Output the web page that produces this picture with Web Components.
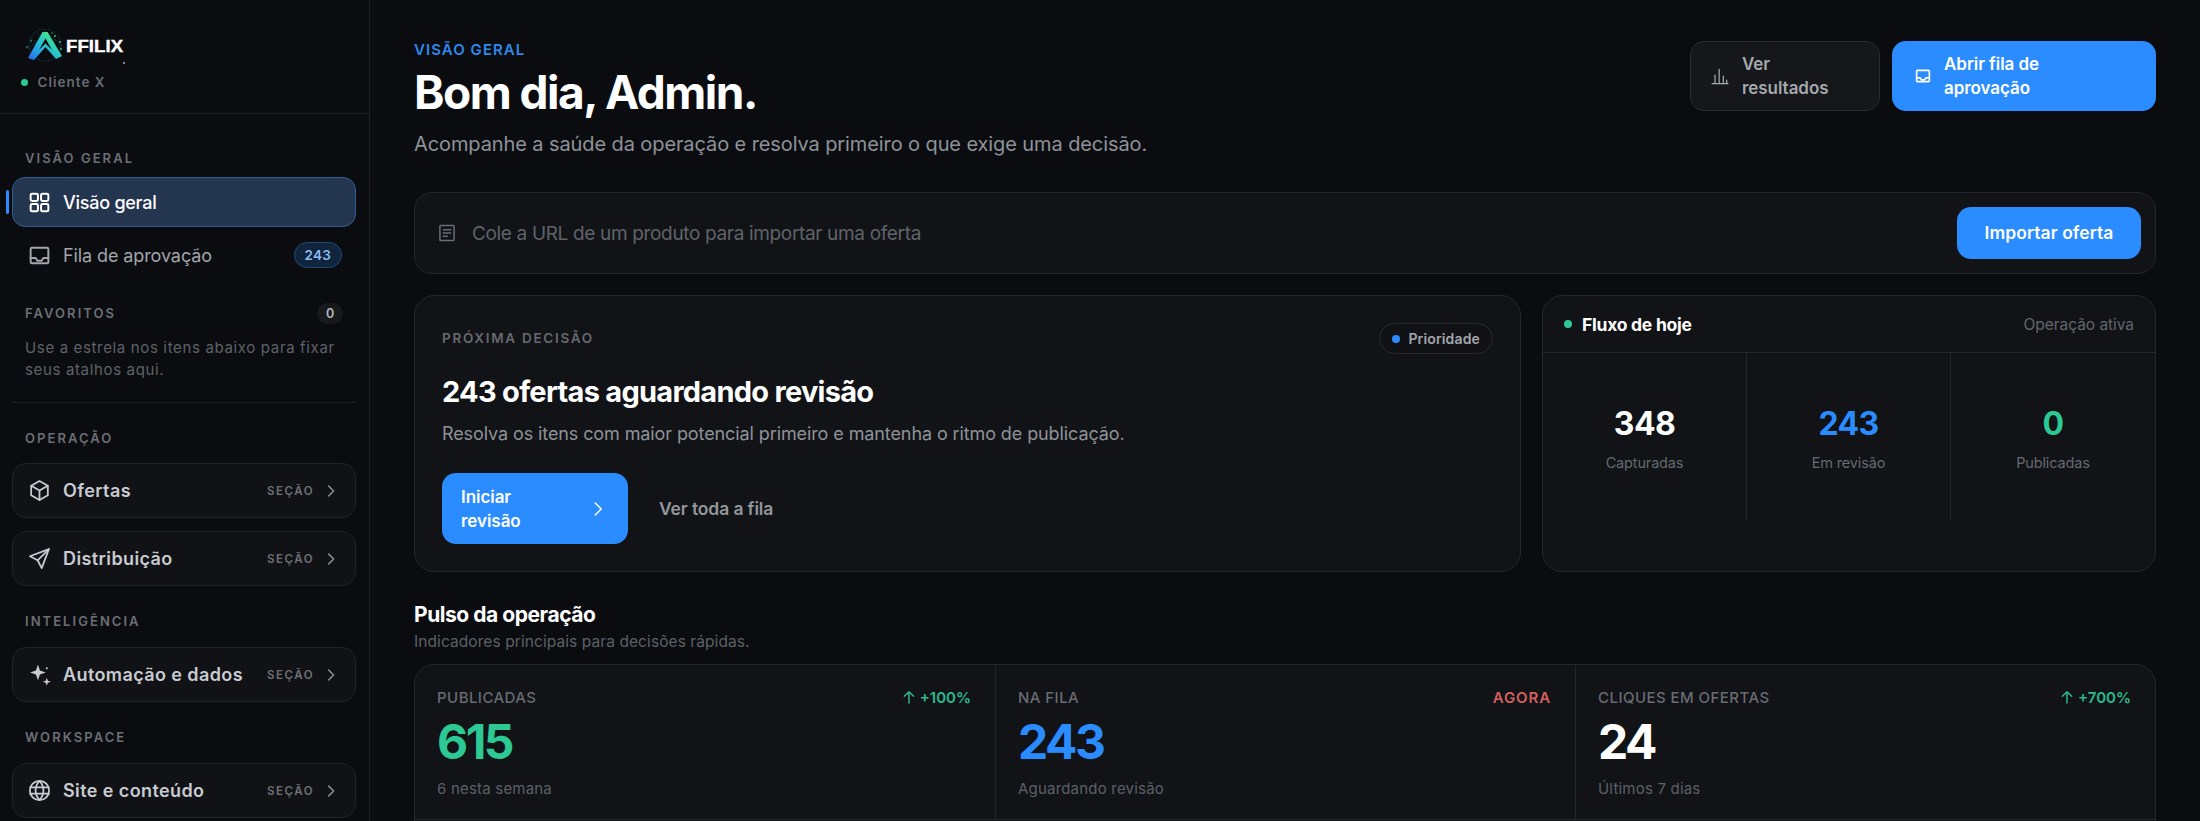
<!DOCTYPE html>
<html lang="pt-BR">
<head>
<meta charset="utf-8">
<title>Affilix</title>
<style>
  html, body { margin: 0; height: 100%; background: #0a0c10; overflow: hidden; }
  body { font-family: Inter, "Noto Sans", sans-serif; color: #fff; }
</style>
</head>
<body>
<app-shell>
  <side-bar slot="side"></side-bar>
  <main-panel slot="main"></main-panel>
</app-shell>

<script>
const ICONS = {
  grid: '<rect x="3.5" y="3.5" width="7" height="7" rx="1.4"/><rect x="13.5" y="3.5" width="7" height="7" rx="1.4"/><rect x="3.5" y="13.5" width="7" height="7" rx="1.4"/><rect x="13.5" y="13.5" width="7" height="7" rx="1.4"/>',
  inbox: '<rect x="3.5" y="4.5" width="17" height="15" rx="1.2"/><path d="M3.5 14.5h4.8l1.6 2.6h4.2l1.6-2.6h4.8"/>',
  box: '<path d="M12 2.8l8 4.6v9.2l-8 4.6-8-4.6V7.4z"/><path d="M4.2 7.5L12 12l7.8-4.5M12 12v9"/>',
  send: '<path d="M21 3L2.8 9.8l7.4 3.9 3.9 7.5z"/><path d="M21 3L10.2 13.7"/>',
  globe: '<circle cx="12" cy="12" r="9.2"/><path d="M3 9h18M3 15h18"/><path d="M12 2.8c-5 5.6-5 12.8 0 18.4M12 2.8c5 5.6 5 12.8 0 18.4"/>',
  chevron: '<path d="M9 5.5l6.5 6.5L9 18.5"/>',
  bars: '<path d="M2.5 21h19M6 21V11M11 21V4M16 21v-9M20 21v-4"/>',
  note: '<rect x="3.5" y="3" width="17" height="18" rx="1"/><path d="M7.5 8h9M7.5 12h9M7.5 16h5"/>',
  up: '<path d="M12 21V4M5 11l7-7 7 7"/>'
};
const SPARK = '<svg viewBox="0 0 24 24" fill="currentColor"><path d="M10.500 2.500l1.900 5.600 5.600 1.900-5.600 1.900-1.900 5.600-1.900-5.600L3 10l5.600-1.900z"/><path d="M19 15l1 2.900 2.900 1-2.900 1-1 2.900-1-2.900-2.900-1 2.900-1z"/><circle cx="19" cy="6" r="1"/></svg>';

function icon(name, size, width = 2) {
  if (name === 'spark') return SPARK.replace('<svg ', `<svg width="${size}" height="${size}" `);
  return `<svg width="${size}" height="${size}" viewBox="0 0 24 24" fill="none" stroke="currentColor" stroke-width="${width}" stroke-linecap="round" stroke-linejoin="round">${ICONS[name]}</svg>`;
}

// small helper so each class stays a few lines
function define(tag, render) {
  customElements.define(tag, class extends HTMLElement {
    connectedCallback() {
      if (this.shadowRoot) return;
      this.attachShadow({ mode: 'open' });
      this.shadowRoot.innerHTML = render(this);
    }
  });
}

define('app-shell', () => `
  <style>
    :host { display: flex; width: 2200px; height: 821px; overflow: hidden; background: #0a0c10; }
    ::slotted([slot=side]) { flex: 0 0 370px; }
    ::slotted([slot=main]) { flex: 1; min-width: 0; }
  </style>
  <slot name="side"></slot><slot name="main"></slot>`);

define('brand-logo', () => `
  <style>
    :host { display: flex; align-items: center; width: 110px; height: 34px; position: relative; }
    svg { flex: none; margin-right: -1px; }
    span { font: 700 16.5px "Liberation Sans", sans-serif; color: #fff; letter-spacing: .1px; -webkit-text-stroke: .4px #fff; transform: scaleX(1.12); transform-origin: left center; }
    i { position: absolute; left: 98px; top: 33px; width: 2px; height: 2px; background: #aaa; border-radius: 50%; }
  </style>
  <svg width="42" height="34" viewBox="0 0 42 34">
    <defs><linearGradient id="lg" x1="0" y1="1" x2="1" y2="0">
      <stop offset="0" stop-color="#2a62ea"/><stop offset=".4" stop-color="#22b6e0"/><stop offset=".7" stop-color="#35dba0"/><stop offset="1" stop-color="#c6e63c"/>
    </linearGradient></defs>
    <circle cx="20" cy="16" r="16" fill="none" stroke="#1c5a5c" stroke-width=".7" stroke-dasharray="1.500 1.500"/>
    <path d="M4 9l8 4 8-11 10 8 7 8M2 20l10-7 14 9 10-4M12 3l8 13M30 10l-2 14" fill="none" stroke="#17484c" stroke-width=".5"/>
    <g fill="#3fc7a0"><circle cx="30" cy="7" r=".9"/><circle cx="35" cy="13" r=".9"/><circle cx="36" cy="20" r=".9"/><circle cx="6" cy="12" r=".8"/><circle cx="27" cy="4" r=".7"/><circle cx="33" cy="27" r=".7"/><circle cx="2" cy="18" r=".8"/></g>
    <path d="M3 29L17.500 3h5L37 27l-6 3-10.500-12L9 31z" fill="url(#lg)"/>
    <path d="M20.500 9.500L27 21l-6.500-6.500L14 21z" fill="#0a0c10"/>
  </svg>
  <span>FFILIX</span><i></i>`);

define('side-label', () => `
  <style>
    :host { display: flex; align-items: center; justify-content: space-between; height: 18px; padding: 0 13px; font: 600 13px/18px Inter, sans-serif; letter-spacing: 2.05px; color: #6c6f75; }
  </style>
  <slot></slot>`);

define('nav-link', el => `
  <style>
    :host { display: flex; align-items: center; height: 50px; box-sizing: border-box; padding: 0 13px 0 14px; border-radius: 13px; border: 1px solid transparent; color: #a2a5aa; font: 400 18px Inter, sans-serif; letter-spacing: -.1px; position: relative; }
    :host([active]) { background: #23354f; border-color: #2f5f94; color: #fff; font-weight: 500; letter-spacing: -.25px; }
    :host([active])::before { content: ""; position: absolute; left: -7px; top: 12px; width: 3px; height: 24px; border-radius: 2px; background: #2a8cff; }
    svg { flex: none; margin-right: 11px; }
    b { margin-left: auto; font: 600 13.5px/24px Inter, sans-serif; letter-spacing: .2px; color: #8dbcf2; height: 24px; padding: 0 10px; border-radius: 13px; border: 1px solid #1d4a78; background: #10243c; }
  </style>
  ${icon(el.getAttribute('icon'), 25, 1.9)}<slot></slot>${el.hasAttribute('count') ? `<b>${el.getAttribute('count')}</b>` : ''}`);

define('nav-section', el => `
  <style>
    :host { display: flex; align-items: center; height: 55px; box-sizing: border-box; padding: 0 15px 0 14px; border-radius: 14px; border: 1px solid #202328; background: #101216; color: #c9cbd0; font: 600 18px Inter, sans-serif; letter-spacing: .4px; }
    svg { flex: none; }
    .lead { display: flex; margin-right: 11px; }
    em { margin-left: auto; font: 600 11.5px Inter, sans-serif; font-style: normal; letter-spacing: 1.5px; color: #6e7177; margin-right: 8px; }
    .end { display: flex; color: #8c8f95; }
  </style>
  <span class="lead">${icon(el.getAttribute('icon'), 25, 1.7)}</span><slot></slot>
  <em>SEÇÃO</em><span class="end">${icon('chevron', 18, 1.9)}</span>`);

define('side-bar', () => `
  <style>
    :host { display: block; box-sizing: border-box; border-right: 1px solid #1e2025; height: 821px; overflow: hidden; background: #0a0c10; }
    header { height: 114px; box-sizing: border-box; padding: 29px 0 0 25px; border-bottom: 1px solid #1e2025; }
    .client { display: flex; align-items: center; margin: 10px 0 0 -4.5px; font: 600 13.5px/18px Inter, sans-serif; letter-spacing: 1px; color: #686b71; }
    .client i { width: 7px; height: 7px; border-radius: 50%; background: #2cc995; margin-right: 10px; }
    nav { display: flex; flex-direction: column; padding: 35px 13px 0 12px; }
    .links { display: flex; flex-direction: column; gap: 3px; margin: 10px 0 24px; }
    .zero { font: 600 12.5px/21px Inter, sans-serif; letter-spacing: 0; width: 26px; text-align: center; border-radius: 11px; background: #17191d; color: #b4b6ba; }
    p { margin: 15px 13px 21px; font: 400 15px/22px Inter, sans-serif; color: #5f6268; letter-spacing: .65px; white-space: nowrap; }
    hr { border: 0; height: 1px; margin: 0 0 26px; background: #1e2025; }
    .stack { display: flex; flex-direction: column; gap: 13px; margin: 17px 0 26px; }
    .first { margin-top: 16px; }
  </style>
  <header>
    <brand-logo></brand-logo>
    <div class="client"><i></i>Cliente X</div>
  </header>
  <nav>
    <side-label>VISÃO GERAL</side-label>
    <div class="links">
      <nav-link icon="grid" active>Visão geral</nav-link>
      <nav-link icon="inbox" count="243">Fila de aprovação</nav-link>
    </div>
    <side-label>FAVORITOS<span class="zero">0</span></side-label>
    <p>Use a estrela nos itens abaixo para fixar<br>seus atalhos aqui.</p>
    <hr>
    <side-label>OPERAÇÃO</side-label>
    <div class="stack first"><nav-section icon="box">Ofertas</nav-section><nav-section icon="send">Distribuição</nav-section></div>
    <side-label>INTELIGÊNCIA</side-label>
    <div class="stack"><nav-section icon="spark">Automação e dados</nav-section></div>
    <side-label>WORKSPACE</side-label>
    <div class="stack"><nav-section icon="globe">Site e conteúdo</nav-section></div>
  </nav>`);

define('ui-button', () => `
  <style>
    :host { display: flex; align-items: center; box-sizing: border-box; border-radius: 14px; font: 600 17px/24px Inter, sans-serif; letter-spacing: -.05px; background: #2a8cff; color: #fff; }
    :host([ghost]) { background: #15171b; border: 1px solid #282b30; color: #a5a8ad; }
  </style>
  <slot></slot>`);

define('page-head', () => `
  <style>
    :host { display: flex; justify-content: space-between; align-items: flex-start; height: 117px; margin-bottom: 34px; }
    small { display: block; font: 600 15px/18px Inter, sans-serif; letter-spacing: 1.05px; color: #2f88ea; }
    h1 { margin: 4px 0 0; font: 700 46px/58px Inter, sans-serif; letter-spacing: -1.5px; color: #fff; }
    p { margin: 10px 0 0; font: 400 20px/26px Inter, sans-serif; letter-spacing: -.1px; color: #8f9298; }
    .acts { display: flex; gap: 12px; }
    ui-button { height: 70px; }
    .a { width: 190px; padding-left: 19px; }
    .b { width: 264px; padding-left: 22px; }
    svg { margin-right: 12px; flex: none; }
  </style>
  <div>
    <small>VISÃO GERAL</small>
    <h1>Bom dia, Admin.</h1>
    <p>Acompanhe a saúde da operação e resolva primeiro o que exige uma decisão.</p>
  </div>
  <div class="acts">
    <ui-button ghost class="a">${icon('bars', 20, 1.5)}<span>Ver<br>resultados</span></ui-button>
    <ui-button class="b">${icon('inbox', 18, 2.2)}<span>Abrir fila de<br>aprovação</span></ui-button>
  </div>`);

define('import-bar', () => `
  <style>
    :host { display: flex; align-items: center; height: 82px; box-sizing: border-box; padding: 0 14px 0 22px; border: 1px solid #23262b; border-radius: 18px; background: #111317; color: #5f6369; font: 400 19px Inter, sans-serif; letter-spacing: -.34px; }
    svg { margin-right: 15px; color: #6a6d73; flex: none; }
    ui-button { margin-left: auto; width: 184px; height: 52px; justify-content: center; font-size: 17.5px; letter-spacing: .05px; }
  </style>
  ${icon('note', 20, 1.8)}<span>Cole a URL de um produto para importar uma oferta</span>
  <ui-button>Importar oferta</ui-button>`);

define('decision-card', () => `
  <style>
    :host { display: block; box-sizing: border-box; height: 277px; padding: 27px 27px 0; border: 1px solid #23262b; border-radius: 20px; background: #111317; }
    .top { display: flex; justify-content: space-between; align-items: center; height: 31px; }
    small { font: 600 13.5px Inter, sans-serif; letter-spacing: 1.7px; color: #67696f; padding-bottom: 2px; }
    .pill { display: flex; align-items: center; box-sizing: border-box; height: 31px; padding: 0 12px; border: 1px solid #282b30; border-radius: 16px; font: 600 14px Inter, sans-serif; letter-spacing: .15px; color: #a3a6ab; background: #101216; }
    .pill i { width: 8px; height: 8px; border-radius: 50%; background: #2a8cff; margin-right: 8px; }
    h2 { margin: 19px 0 0; font: 700 29px/38px Inter, sans-serif; letter-spacing: -.73px; color: #fff; }
    p { margin: 10px 0 0; font: 400 18px/26px Inter, sans-serif; letter-spacing: -.1px; color: #8f9298; }
    .row { display: flex; align-items: center; margin-top: 26px; }
    ui-button { width: 186px; height: 71px; padding: 0 19px 0 19px; justify-content: space-between; }
    a { margin-left: 31px; font: 600 17.5px Inter, sans-serif; letter-spacing: -.12px; color: #94979c; }
  </style>
  <div class="top"><small>PRÓXIMA DECISÃO</small><span class="pill"><i></i>Prioridade</span></div>
  <h2>243 ofertas aguardando revisão</h2>
  <p>Resolva os itens com maior potencial primeiro e mantenha o ritmo de publicação.</p>
  <div class="row">
    <ui-button><span>Iniciar<br>revisão</span>${icon('chevron', 22, 1.6)}</ui-button>
    <a>Ver toda a fila</a>
  </div>`);

define('flow-stat', el => `
  <style>
    :host { display: block; height: 168px; box-sizing: border-box; padding-top: 51px; text-align: center; border-right: 1px solid #23262b; }
    :host(:last-child) { border-right: 0; }
    b { display: block; font: 700 32px/40px Inter, sans-serif; letter-spacing: -.6px; color: ${el.getAttribute('color') || '#fff'}; }
    span { display: block; margin-top: 9px; font: 400 14.5px/20px Inter, sans-serif; letter-spacing: -.15px; color: #666970; }
  </style>
  <b>${el.getAttribute('value')}</b><span><slot></slot></span>`);

define('flow-card', () => `
  <style>
    :host { display: block; box-sizing: border-box; height: 277px; border: 1px solid #23262b; border-radius: 20px; background: #111317; }
    .head { display: flex; align-items: center; height: 56px; padding: 0 21px; border-bottom: 1px solid #23262b; }
    i { width: 8px; height: 8px; border-radius: 50%; background: #2cc995; margin-right: 10px; }
    b { font: 700 17.5px Inter, sans-serif; letter-spacing: -.25px; color: #fff; }
    span { margin-left: auto; font: 400 15.5px Inter, sans-serif; letter-spacing: -.05px; color: #63666c; }
    .cols { display: grid; grid-template-columns: repeat(3, 1fr); }
  </style>
  <div class="head"><i></i><b>Fluxo de hoje</b><span>Operação ativa</span></div>
  <div class="cols">
    <flow-stat value="348">Capturadas</flow-stat>
    <flow-stat value="243" color="#2a8cff">Em revisão</flow-stat>
    <flow-stat value="0" color="#2cc995">Publicadas</flow-stat>
  </div>`);

define('metric-cell', el => {
  const tone = el.getAttribute('tone');
  const delta = el.getAttribute('delta');
  const alert = el.hasAttribute('alert');
  return `
  <style>
    :host { display: block; box-sizing: border-box; height: 155px; padding: 23px 24px 0 22px; border-left: 1px solid #23262b; border-bottom: 1px solid #23262b; }
    :host(:first-child) { border-left: 0; }
    .top { display: flex; justify-content: space-between; align-items: center; height: 18px; }
    small { font: 500 15px Inter, sans-serif; letter-spacing: .45px; color: #686b72; }
    em { display: flex; align-items: center; gap: 3px; font: 600 15px Inter, sans-serif; font-style: normal; letter-spacing: ${alert ? '.9px' : '0'}; color: ${alert ? '#d7605f' : '#2bb98b'}; }
    b { display: block; margin-top: 8px; font: 700 48px/56px Inter, sans-serif; letter-spacing: -2.5px; color: ${tone || '#fff'}; }
    span { display: block; margin-top: 9px; font: 400 15px/20px Inter, sans-serif; letter-spacing: .2px; color: #5d6066; }
  </style>
  <div class="top"><small>${el.getAttribute('label')}</small><em>${alert ? '' : icon('up', 16, 2.2)}${delta}</em></div>
  <b>${el.getAttribute('value')}</b><span><slot></slot></span>`;
});

define('main-panel', () => `
  <style>
    :host { display: block; height: 821px; overflow: hidden; box-sizing: border-box; padding: 41px 44px 0; }
    .split { display: grid; grid-template-columns: 1107px 1fr; gap: 21px; margin-top: 21px; }
    h3 { margin: 29px 0 0; font: 700 21px/28px Inter, sans-serif; letter-spacing: -.45px; color: #fff; }
    .sub { margin: 1px 0 0; font: 400 15.5px/24px Inter, sans-serif; letter-spacing: .08px; color: #5d6066; }
    .metrics { display: grid; grid-template-columns: 580px 580px 1fr; margin-top: 10px; min-height: 220px; border: 1px solid #23262b; border-radius: 20px; background: #111317; align-content: start; }
  </style>
  <page-head></page-head>
  <import-bar></import-bar>
  <div class="split"><decision-card></decision-card><flow-card></flow-card></div>
  <h3>Pulso da operação</h3>
  <p class="sub">Indicadores principais para decisões rápidas.</p>
  <div class="metrics">
    <metric-cell label="PUBLICADAS" value="615" tone="#2cc995" delta="+100%">6 nesta semana</metric-cell>
    <metric-cell label="NA FILA" value="243" tone="#2a8cff" delta="AGORA" alert>Aguardando revisão</metric-cell>
    <metric-cell label="CLIQUES EM OFERTAS" value="24" delta="+700%">Últimos 7 dias</metric-cell>
  </div>`);
</script>
</body>
</html>
